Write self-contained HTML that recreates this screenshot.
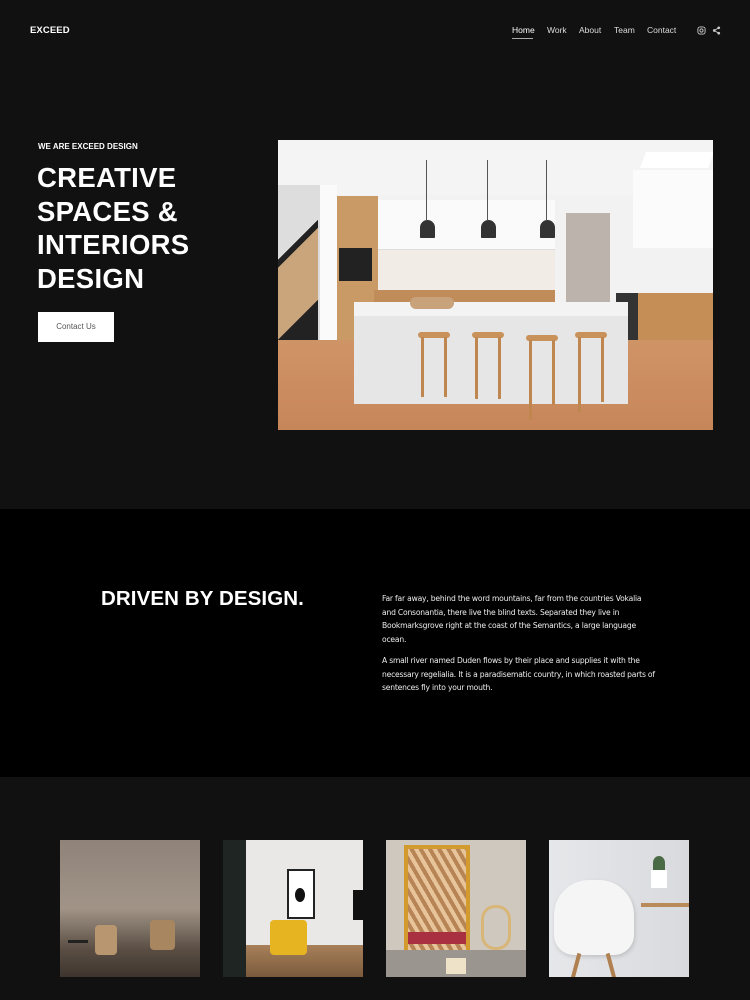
<!DOCTYPE html>
<html><head><meta charset="utf-8"><style>
*{margin:0;padding:0;box-sizing:border-box}
body{width:750px;height:1000px;background:#111;font-family:"Liberation Sans",sans-serif;color:#fff;position:relative;overflow:hidden}
.a{position:absolute}
.nav a{position:absolute;top:25px;font-size:8.5px;color:#ddd;text-decoration:none}
h1{position:absolute;left:37px;top:161px;font-size:27.5px;line-height:33.5px;font-weight:bold;letter-spacing:0.3px}
.p{font-size:7.6px;line-height:13.5px;color:#eee;font-family:"DejaVu Sans",sans-serif;letter-spacing:-0.2px;white-space:nowrap}
.stool{position:absolute;width:32px;height:6px;background:#c9925a;border-radius:3px}
.leg{position:absolute;width:3px;background:#c08650}
</style></head><body>
<div class="a" style="left:30px;top:25px;font-size:9.5px;font-weight:bold;letter-spacing:0.1px">EXCEED</div>
<div class="nav">
<a style="left:512px;color:#fff">Home</a><div class="a" style="left:512px;top:38px;width:21px;height:1px;background:#aaa"></div>
<a style="left:547px">Work</a><a style="left:579px">About</a><a style="left:614px">Team</a><a style="left:647px">Contact</a>
</div>
<svg class="a" style="left:697px;top:26px" width="9" height="9" viewBox="0 0 10 10"><rect x="1" y="1" width="8" height="8" rx="2.5" fill="none" stroke="#ccc" stroke-width="1"/><circle cx="5" cy="5" r="1.8" fill="none" stroke="#ccc" stroke-width="1"/></svg>
<svg class="a" style="left:712px;top:26px" width="9" height="9" viewBox="0 0 10 10"><circle cx="7.5" cy="2" r="1.5" fill="#ccc"/><circle cx="2.5" cy="5" r="1.5" fill="#ccc"/><circle cx="7.5" cy="8" r="1.5" fill="#ccc"/><path d="M7.5 2L2.5 5L7.5 8" stroke="#ccc" fill="none"/></svg>

<div class="a" style="left:38px;top:142px;font-size:8px;font-weight:bold">WE ARE EXCEED DESIGN</div>
<h1>CREATIVE<br>SPACES &amp;<br>INTERIORS<br>DESIGN</h1>
<div class="a" style="left:38px;top:312px;width:76px;height:30px;background:#fff;color:#555;font-size:8px;text-align:center;line-height:30px">Contact Us</div>

<div class="a" style="left:278px;top:140px;width:435px;height:290px;background:#f2f2f2;overflow:hidden">
 <div class="a" style="left:0;top:0;width:435px;height:55px;background:#f4f4f4"></div>
 <div class="a" style="left:365px;top:12px;width:68px;height:16px;background:#fff;transform:skewX(-20deg)"></div>
 <div class="a" style="left:0;top:45px;width:42px;height:160px;background:#ddd"></div>
 <div class="a" style="left:0;top:80px;width:40px;height:120px;background:linear-gradient(135deg,#ddd 0 25%,#222 25% 30%,#caa57c 30% 75%,#222 75%)"></div>
 <div class="a" style="left:42px;top:45px;width:17px;height:160px;background:#fafafa"></div>
 <div class="a" style="left:59px;top:56px;width:41px;height:148px;background:#c99a66"></div>
 <div class="a" style="left:61px;top:108px;width:33px;height:33px;background:#222"></div>
 <div class="a" style="left:100px;top:60px;width:177px;height:50px;background:#fafafa;border-bottom:1px solid #ddd"></div>
 <div class="a" style="left:100px;top:110px;width:177px;height:42px;background:#f1ede6"></div>
 <div class="a" style="left:96px;top:150px;width:181px;height:13px;background:#c08d5a"></div>
 <div class="a" style="left:288px;top:73px;width:44px;height:90px;background:#bcb4ac"></div>
 <div class="a" style="left:355px;top:30px;width:80px;height:78px;background:#fbfbfb"></div>
 <div class="a" style="left:338px;top:153px;width:97px;height:100px;background:#c58e57"></div>
 <div class="a" style="left:338px;top:153px;width:22px;height:60px;background:#333"></div>
 <div class="a" style="left:0;top:200px;width:435px;height:90px;background:linear-gradient(180deg,#cf9466,#c7865a)"></div>
 <div class="a" style="left:76px;top:162px;width:274px;height:102px;background:#e6e6e6"></div>
 <div class="a" style="left:76px;top:162px;width:274px;height:14px;background:#f3f3f3"></div>
 <div class="a" style="left:132px;top:157px;width:44px;height:12px;background:#c7a27a;border-radius:6px"></div>
 <div class="a" style="left:148px;top:20px;width:1px;height:60px;background:#555"></div><div class="a" style="left:142px;top:80px;width:15px;height:18px;background:#333;border-radius:8px 8px 1px 1px"></div>
 <div class="a" style="left:209px;top:20px;width:1px;height:60px;background:#555"></div><div class="a" style="left:203px;top:80px;width:15px;height:18px;background:#333;border-radius:8px 8px 1px 1px"></div>
 <div class="a" style="left:268px;top:20px;width:1px;height:60px;background:#555"></div><div class="a" style="left:262px;top:80px;width:15px;height:18px;background:#333;border-radius:8px 8px 1px 1px"></div>
 <div class="stool" style="left:140px;top:192px"></div><div class="leg" style="left:143px;top:197px;height:60px"></div><div class="leg" style="left:166px;top:197px;height:60px"></div>
 <div class="stool" style="left:194px;top:192px"></div><div class="leg" style="left:197px;top:197px;height:62px"></div><div class="leg" style="left:220px;top:197px;height:62px"></div>
 <div class="stool" style="left:248px;top:195px"></div><div class="leg" style="left:251px;top:200px;height:80px"></div><div class="leg" style="left:274px;top:200px;height:65px"></div>
 <div class="stool" style="left:297px;top:192px"></div><div class="leg" style="left:300px;top:197px;height:75px"></div><div class="leg" style="left:323px;top:197px;height:65px"></div>
</div>

<div class="a" style="left:0;top:509px;width:750px;height:268px;background:#000"></div>
<div class="a" style="left:101px;top:587px;font-size:20.5px;font-weight:bold;letter-spacing:0.1px">DRIVEN BY DESIGN.</div>
<div class="a p" style="left:382px;top:592px">Far far away, behind the word mountains, far from the countries Vokalia<br>and Consonantia, there live the blind texts. Separated they live in<br>Bookmarksgrove right at the coast of the Semantics, a large language<br>ocean.</div>
<div class="a p" style="left:382px;top:654px">A small river named Duden flows by their place and supplies it with the<br>necessary regelialia. It is a paradisematic country, in which roasted parts of<br>sentences fly into your mouth.</div>

<div class="a" style="left:60px;top:840px;width:140px;height:137px;background:linear-gradient(180deg,#8f837a,#a19487 50%,#5a4e44 80%,#3e352e);overflow:hidden">
 <div class="a" style="left:35px;top:85px;width:22px;height:30px;background:#b89770;border-radius:4px"></div>
 <div class="a" style="left:90px;top:80px;width:25px;height:30px;background:#a88760;border-radius:4px"></div>
 <div class="a" style="left:8px;top:100px;width:20px;height:3px;background:#222"></div>
</div>
<div class="a" style="left:223px;top:840px;width:140px;height:137px;background:#e9e8e6;overflow:hidden">
 <div class="a" style="left:0;top:0;width:23px;height:137px;background:#1e2523"></div>
 <div class="a" style="left:23px;top:105px;width:117px;height:32px;background:linear-gradient(180deg,#a8805a,#7a5a3c)"></div>
 <div class="a" style="left:64px;top:29px;width:28px;height:50px;background:#fff;border:2px solid #222"></div>
 <div class="a" style="left:72px;top:48px;width:10px;height:14px;background:#111;border-radius:50%"></div>
 <div class="a" style="left:47px;top:80px;width:37px;height:35px;background:#e6b421;border-radius:4px"></div>
 <div class="a" style="left:130px;top:50px;width:10px;height:30px;background:#111"></div>
</div>
<div class="a" style="left:386px;top:840px;width:140px;height:137px;background:#cfc8be;overflow:hidden">
 <div class="a" style="left:18px;top:5px;width:66px;height:110px;border:4px solid #d39b2e;background:repeating-linear-gradient(60deg,#e8c49a 0 4px,#b78555 4px 8px)"></div>
 <div class="a" style="left:0;top:110px;width:140px;height:27px;background:#9a958f"></div>
 <div class="a" style="left:22px;top:92px;width:58px;height:12px;background:#a83040"></div>
 <div class="a" style="left:95px;top:65px;width:30px;height:45px;border:3px solid #d8b678;border-radius:14px"></div>
 <div class="a" style="left:60px;top:118px;width:20px;height:16px;background:#eee2c8"></div>
</div>
<div class="a" style="left:549px;top:840px;width:140px;height:137px;background:linear-gradient(90deg,#e6e7ea,#d9dadd);overflow:hidden">
 <div class="a" style="left:5px;top:40px;width:80px;height:75px;background:#f5f5f6;border-radius:35px 35px 20px 20px;box-shadow:1px 2px 4px rgba(0,0,0,.15)"></div>
 <div class="a" style="left:25px;top:113px;width:4px;height:26px;background:#b08050;transform:rotate(15deg)"></div>
 <div class="a" style="left:60px;top:113px;width:4px;height:26px;background:#b08050;transform:rotate(-15deg)"></div>
 <div class="a" style="left:92px;top:63px;width:48px;height:4px;background:#b98a5a"></div>
 <div class="a" style="left:102px;top:30px;width:16px;height:18px;background:#fff"></div>
 <div class="a" style="left:104px;top:16px;width:12px;height:14px;background:#4a6a45;border-radius:50% 50% 0 0"></div>
</div>
</body></html>
